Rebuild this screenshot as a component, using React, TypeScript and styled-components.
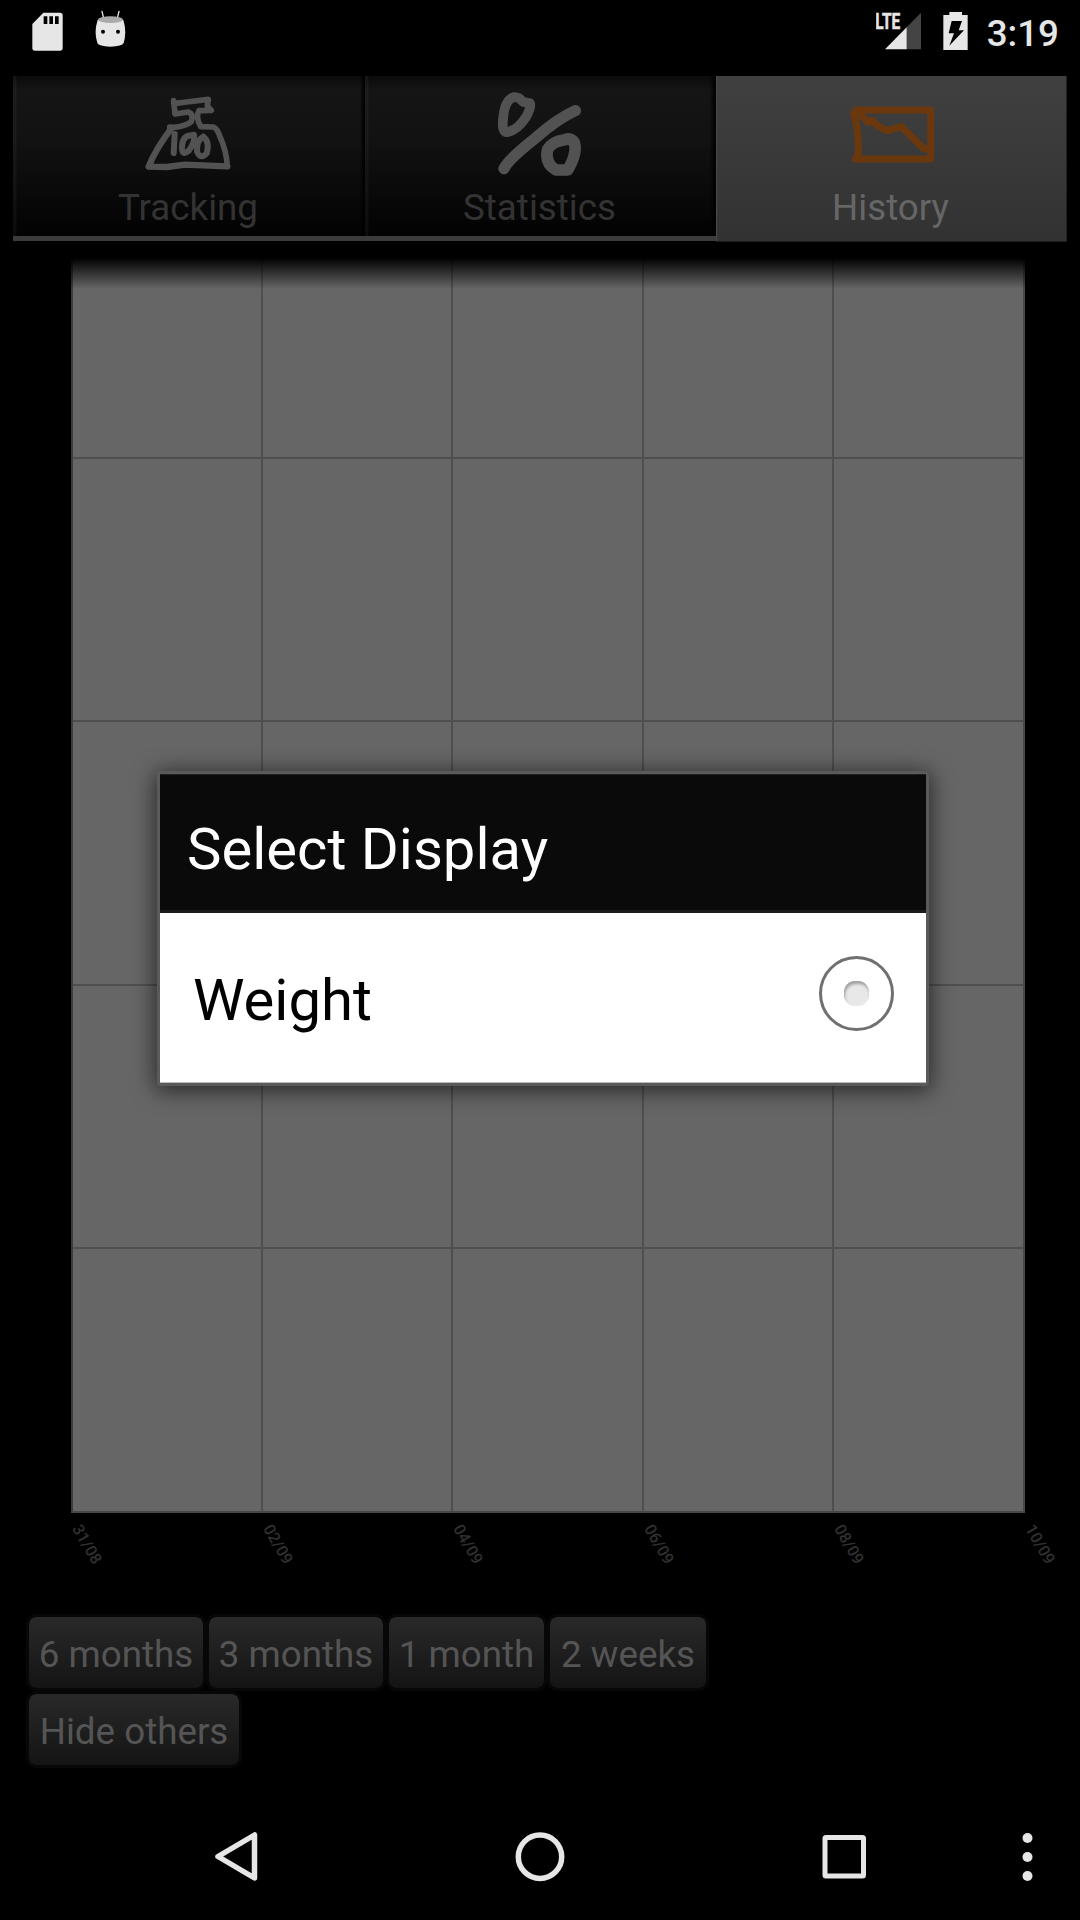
import React from "react";
import styled, { createGlobalStyle } from "styled-components";

const GlobalStyle = createGlobalStyle`
  * { box-sizing: border-box; }
  body { margin: 0; background: #000; }
`;

const Screen = styled.div`
  position: relative;
  display: flex;
  flex-direction: column;
  width: 1080px;
  height: 1920px;
  overflow: hidden;
  background: #000;
  font-family: Roboto, "Noto Sans", sans-serif;
`;

const StatusBar = styled.header`
  display: flex;
  justify-content: space-between;
  height: 76px;
  flex: none;
  padding: 0 21px 0 32px;
`;

const StatusGroup = styled.div<{ $gap: number }>`
  display: flex;
  align-items: flex-start;
  gap: ${(p) => p.$gap}px;
  padding-top: 10px;
`;

const Clock = styled.span`
  margin: 1px 0 0 -3px;
  color: #e6e6e6;
  font-size: 36.75px;
  font-weight: 500;
  line-height: 46px;
`;

const TabBar = styled.nav`
  display: grid;
  grid-template-columns: 352px 351px 351px;
  flex: none;
  height: 165px;
  margin-left: 13px;
`;

const Tab = styled.div<{ $active?: boolean; $shade: number }>`
  display: flex;
  flex-direction: column;
  align-items: center;
  justify-content: space-between;
  padding: 12px 2px ${(p) => (p.$active ? 11 : 6)}px 0;
  border-bottom: ${(p) => (p.$active ? "none" : "5px solid #3b3b3b")};
  background: ${(p) =>
    p.$active
      ? "linear-gradient(#404040, #323232)"
      : `linear-gradient(90deg, rgba(255,255,255,0.035) 3px, transparent 4px, rgba(0,0,0,0) ${351 - p.$shade}px, #000 351px), linear-gradient(#0b0b0b, #151515 14px, #121212 40%, #020202)`};
  box-shadow: ${(p) =>
    p.$active ? "inset 1px 0 #4a4a4a, inset -1px 0 #222, 0 1px #1c1c1c" : "none"};
`;

const TabIcon = styled.div<{ $left: number; $top: number }>`
  display: flex;
  align-items: center;
  justify-content: center;
  width: 100px;
  height: 92px;
  padding: ${(p) => p.$top}px 0 0 ${(p) => p.$left}px;
`;

const TabLabel = styled.span<{ $active?: boolean }>`
  color: ${(p) => (p.$active ? "#666" : "#333")};
  font-size: 36.75px;
  line-height: 44px;
`;

const ChartArea = styled.main`
  flex: none;
  width: 954px;
  margin: 17px 0 0 71px;
`;

const Plot = styled.div`
  position: relative;
  display: grid;
  grid-template-columns: 190px 190px 191px 190px 1fr;
  grid-template-rows: 201px 263px 264px 263px 1fr;
  height: 1255px;
  border: solid #484848;
  border-width: 0 2px 2px;
  border-left-color: #3c3c3c;
  background: #666;
`;

const Cell = styled.div`
  border: solid #4f4f4f;
  border-width: 0 2px 2px 0;

  &:nth-child(5n) { border-right: none; }
  &:nth-child(n + 21) { border-bottom: none; }
`;

const TopFade = styled.div`
  position: absolute;
  inset: 0 -2px auto -2px;
  height: 31px;
  background: linear-gradient(#000, rgba(0, 0, 0, 0));
`;

const Axis = styled.div`
  display: flex;
  height: 101px;
`;

const Tick = styled.span`
  flex: 0 0 190.5px;
  height: 24px;
  padding-top: 3px;
  color: #303030;
  font-size: 16px;
  font-weight: 500;
  line-height: 20px;
  white-space: nowrap;

  i {
    display: inline-block;
    font-style: normal;
    transform: translate(5px, 0) rotate(60deg);
    transform-origin: 0 50%;
  }
`;

const Filters = styled.div`
  display: flex;
  flex-direction: column;
  flex: none;
  padding-left: 26px;
`;

const FilterRow = styled.div`
  display: flex;
`;

const FilterButton = styled.button<{ $width: number }>`
  width: ${(p) => p.$width}px;
  height: 77px;
  padding: 4px 0 0;
  border: 3px solid #070707;
  border-radius: 10px;
  background: linear-gradient(#292929, #141414) padding-box;
  color: #555;
  font-family: inherit;
  font-size: 36.75px;
  line-height: 44px;
  white-space: nowrap;
`;

const Dialog = styled.section`
  position: absolute;
  top: 771px;
  left: 157px;
  width: 772px;
  height: 315px;
  border: 3px solid #5a5a5a;
  border-radius: 4px;
  background: #fff;
  box-shadow: 0 3px 22px 2px rgba(0, 0, 0, 0.6);
`;

const DialogTitle = styled.h1`
  margin: 0;
  height: 139px;
  padding: 40px 27px 0;
  border-top: 1px solid #222;
  border-bottom: 3px solid #1a1a1c;
  background: #0a0a0a;
  color: #fff;
  font-size: 58px;
  font-weight: 400;
  line-height: 68px;
`;

const Option = styled.div`
  display: flex;
  justify-content: space-between;
  height: 170px;
  padding: 43px 32px 0 33px;
  border-bottom: 1px solid #bbb;
  color: #000;
  font-size: 58px;
  line-height: 88px;
`;

const Radio = styled.span`
  display: flex;
  align-items: center;
  justify-content: center;
  width: 75px;
  height: 75px;
  border: 3.5px solid #707070;
  border-radius: 50%;

  &::after {
    content: "";
    width: 25px;
    height: 25px;
    border-radius: 11px;
    background: #e8e8e8;
    box-shadow: inset 1px 3px 3px #a0a0a0;
  }
`;

const NavBar = styled.footer`
  display: grid;
  grid-template-columns: 85.5px 1fr 1fr 1fr 85.5px;
  align-items: center;
  justify-items: center;
  height: 126px;
  margin-top: auto;
`;

const SdCard = () => (
  <svg width="32" height="42" viewBox="96 30 96 126">
    <path fill="#e6e6e6" d="M130 38H180Q188 38 188 46V144Q188 152 180 152H105Q97 152 97 144V72Z" />
    <path d="M131 49H142V72H131ZM148 49H159V72H148ZM165 49H176V72H165Z" />
  </svg>
);

const Marshmallow = () => (
  <svg width="32" height="42" viewBox="285 30 96 126">
    <path stroke="#e6e6e6" strokeWidth="4" strokeLinecap="round" d="M306 34L311 55M357 34L352 55" />
    <path fill="#e6e6e6" d="M293 60Q331 48 370 60Q381 95 371 129Q367 139 331 140Q296 139 292 129Q281 95 293 60Z" />
    <ellipse cx="331.500" cy="59" rx="37" ry="10" fill="#aaa" />
    <circle cx="309" cy="95" r="6" />
    <circle cx="354" cy="95" r="6" />
  </svg>
);

const Signal = () => (
  <svg width="46" height="42" viewBox="528 30 138 126">
    <path fill="#444" d="M620 82L663 38V148H620Z" />
    <path fill="#e6e6e6" d="M555 148L620 82V148Z" />
    <text x="526" y="87" fill="#e6e6e6" stroke="#e6e6e6" strokeWidth="1.500" fontFamily="Roboto" fontWeight="700" fontSize="66" textLength="75" lengthAdjust="spacingAndGlyphs">LTE</text>
  </svg>
);

const Battery = () => (
  <svg width="26" height="42" viewBox="729 30 78 126">
    <path fill="#e6e6e6" d="M748 36H786V45H803V150H730V45H748Z" />
    <path d="M755 63H786L776 91H792L748 137L762 100H746Z" />
  </svg>
);

const ScaleIcon = () => (
  <svg width="86" height="82" viewBox="435 279 258 246">
    <g fill="none" stroke="#525252" strokeLinecap="round" strokeLinejoin="round">
      <path strokeWidth="17" d="M521 302L525 341M521 311L560 306L625 298L622 318L634 331L597 332M525 342L565 336Q582 342 574 365Q560 378 522 382L509 381M597 332Q586 350 602 380L640 381Q652 385 660 410Q680 455 682 499" />
      <path strokeWidth="19" d="M514 385Q465 450 446 500L500 501L555 494L682 499" />
      <path strokeWidth="18" d="M524 402L521 459M573 406Q545 408 546 446Q548 468 566 452Q585 430 582 404M610 410Q590 420 591 455Q602 480 620 460Q630 425 610 410" />
    </g>
  </svg>
);

const PercentIcon = () => (
  <svg width="83" height="84" viewBox="411 96 249 252">
    <g fill="none" stroke="#525252" strokeLinecap="round" strokeLinejoin="round">
      <path strokeWidth="29" d="M460 111Q430 118 426 180Q422 220 441 216Q470 210 496 170Q512 140 507 130L487 126L474 114Z" />
      <path strokeWidth="34" d="M643 152Q590 176 526 232Q440 300 429 326" />
      <path strokeWidth="35" d="M611 239Q574 244 560 268Q550 310 585 330H620Q650 280 640 248Q630 232 611 239Z" />
    </g>
  </svg>
);

const ChartIcon = () => (
  <svg width="84" height="58" viewBox="447 316 252 174">
    <g fill="none" stroke="#6b380e" strokeLinecap="round" strokeLinejoin="round">
      <path strokeWidth="21" d="M459 335L466 328H689V475H463L472 460Q475 400 458 338" />
      <path strokeWidth="21" d="M470 334L503 366L514 359Q534 382 560 390L602 378L668 444L685 446" />
    </g>
  </svg>
);

const tabs = [
  { label: "Tracking", icon: <ScaleIcon />, shade: 4, left: 0, top: 0 },
  { label: "Statistics", icon: <PercentIcon />, shade: 7, left: -0, top: 0 },
  { label: "History", icon: <ChartIcon />, shade: 0, left: 2, top: 2, active: true },
];

const dates = ["31/08", "02/09", "04/09", "06/09", "08/09", "10/09"];

export default function App() {
  return (
    <Screen>
      <GlobalStyle />
      <StatusBar>
        <StatusGroup $gap={31}>
          <SdCard />
          <Marshmallow />
        </StatusGroup>
        <StatusGroup $gap={21}>
          <Signal />
          <Battery />
          <Clock>3:19</Clock>
        </StatusGroup>
      </StatusBar>

      <TabBar>
        {tabs.map((t) => (
          <Tab key={t.label} $active={t.active} $shade={t.shade}>
            <TabIcon $left={t.left} $top={t.top}>{t.icon}</TabIcon>
            <TabLabel $active={t.active}>{t.label}</TabLabel>
          </Tab>
        ))}
      </TabBar>

      <ChartArea>
        <Plot>
          {Array.from({ length: 25 }, (_, i) => (
            <Cell key={i} />
          ))}
          <TopFade />
        </Plot>
        <Axis>
          {dates.map((d) => (
            <Tick key={d}>
              <i>{d}</i>
            </Tick>
          ))}
        </Axis>
      </ChartArea>

      <Filters>
        <FilterRow>
          <FilterButton $width={180}>6 months</FilterButton>
          <FilterButton $width={180}>3 months</FilterButton>
          <FilterButton $width={161}>1 month</FilterButton>
          <FilterButton $width={162}>2 weeks</FilterButton>
        </FilterRow>
        <FilterRow>
          <FilterButton $width={216}>Hide others</FilterButton>
        </FilterRow>
      </Filters>

      <NavBar>
        <span />
        <svg width="60" height="60" viewBox="0 0 60 60">
          <path fill="none" stroke="#e6e6e6" strokeWidth="5.500" strokeLinejoin="round" d="M47.500 8V51L11 29.500Z" />
        </svg>
        <svg width="60" height="60" viewBox="0 0 60 60">
          <circle cx="30" cy="29.700" r="21.700" fill="none" stroke="#e6e6e6" strokeWidth="5.500" />
        </svg>
        <svg width="60" height="60" viewBox="0 0 60 60">
          <rect x="12" y="10.500" width="38.500" height="38.500" rx="1" fill="none" stroke="#e6e6e6" strokeWidth="5" />
        </svg>
        <svg width="60" height="60" viewBox="0 0 60 60" fill="#e6e6e6">
          <circle cx="20.500" cy="11" r="5" />
          <circle cx="20.500" cy="30" r="5" />
          <circle cx="20.500" cy="49" r="5" />
        </svg>
      </NavBar>

      <Dialog role="dialog">
        <DialogTitle>Select Display</DialogTitle>
        <Option>
          Weight
          <Radio />
        </Option>
      </Dialog>
    </Screen>
  );
}
